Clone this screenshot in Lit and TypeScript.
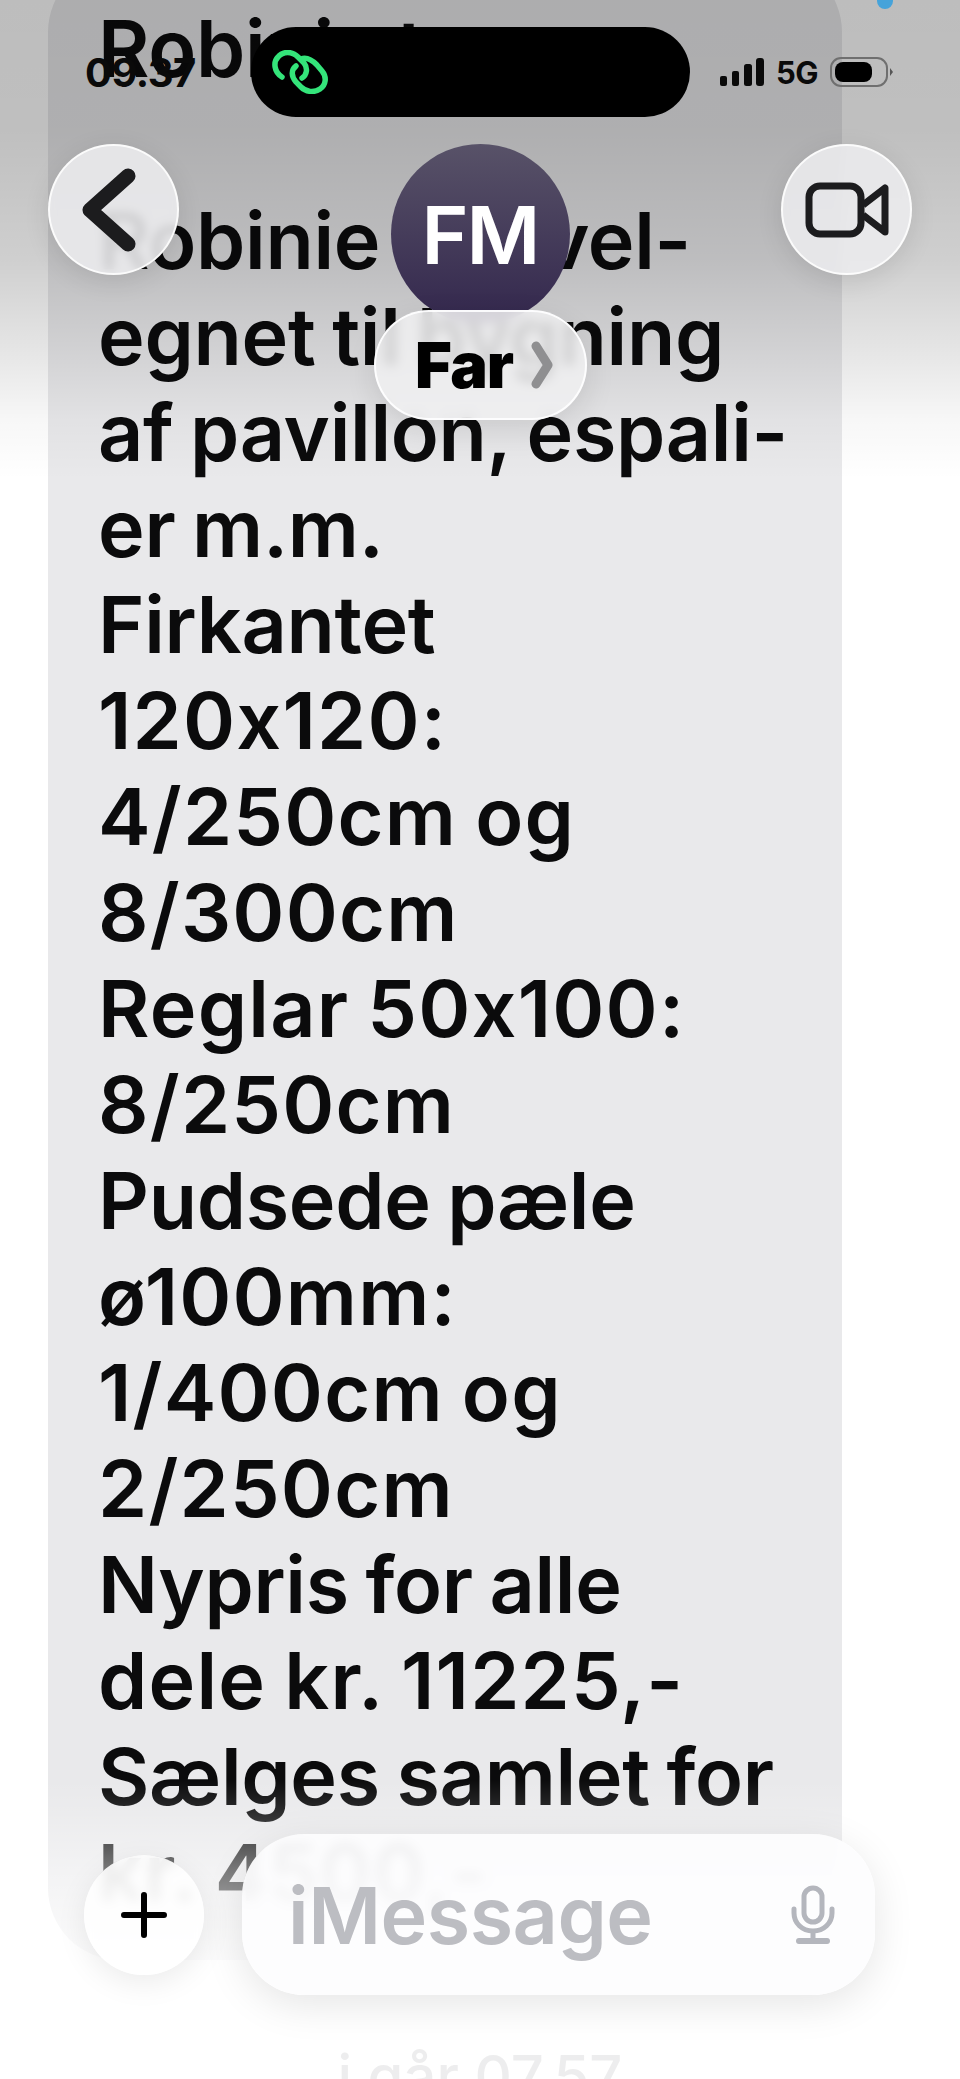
import { LitElement, html, css } from 'lit';
import { customElement } from 'lit/decorators.js';

const LINES = [
  'Robinie træ',
  '\u00a0',
  'Robinie træ vel-',
  'egnet til bygning',
  'af pavillon, espali-',
  'er m.m.',
  'Firkantet',
  '120x120:',
  '4/250cm og',
  '8/300cm',
  'Reglar 50x100:',
  '8/250cm',
  'Pudsede pæle',
  'ø100mm:',
  '1/400cm og',
  '2/250cm',
  'Nypris for alle',
  'dele kr. 11225,-',
  'Sælges samlet for',
  'kr. 4500,-',
];

@customElement('app-root')
export class AppRoot extends LitElement {
  static styles = css`
    :host {
      display: block;
      position: relative;
      height: 2079px;
      overflow: hidden;
      background: #fff;
      font-family: Inter, 'Liberation Sans', sans-serif;
    }

    .thread {
      display: flex;
      flex-direction: column;
      align-items: center;
      margin-top: -40px;
    }

    .bubble {
      align-self: flex-start;
      box-sizing: border-box;
      width: 794px;
      height: 2000px;
      margin-left: 48px;
      padding: 40px 0 0 50px;
      background: #e9e9eb;
      border-radius: 72px;
      color: #0b0b0c;
      font-size: 79px;
      font-weight: 600;
      line-height: 96px;
      letter-spacing: -0.3px;
      word-spacing: -3px;
      white-space: nowrap;
    }

    /* digits run wider in the reference */
    .num {
      letter-spacing: 1.2px;
    }

    .stamp {
      margin-top: 84px;
      color: #6f6f73;
      font-size: 58px;
      font-weight: 500;
      line-height: 64px;
    }

    .top-fade {
      position: absolute;
      inset: 0 0 auto 0;
      height: 480px;
      background: linear-gradient(
        to bottom,
        rgba(0, 0, 0, 0.26) 0,
        rgba(0, 0, 0, 0.25) 130px,
        rgba(0, 0, 0, 0.19) 260px,
        rgba(0, 0, 0, 0.1) 350px,
        rgba(0, 0, 0, 0.03) 420px,
        rgba(0, 0, 0, 0) 480px
      );
    }

    .bottom-fade {
      position: absolute;
      inset: auto 0 0 0;
      height: 300px;
      background: linear-gradient(
        to bottom,
        rgba(255, 255, 255, 0) 0,
        rgba(255, 255, 255, 0.12) 30px,
        rgba(255, 255, 255, 0.45) 90px,
        rgba(255, 255, 255, 0.88) 190px,
        rgba(255, 255, 255, 0.88) 100%
      );
    }

    .dot {
      position: absolute;
      top: -7px;
      left: 877px;
      width: 16px;
      height: 16px;
      border-radius: 50%;
      background: #46a3da;
    }

    .status {
      position: absolute;
      top: 27px;
      left: 0;
      right: 0;
      display: grid;
      grid-template-columns: 251px 439px 1fr;
      align-items: center;
      height: 90px;
      color: #0a0a0a;
    }

    .time {
      padding-left: 85px;
      font-size: 40px;
      font-weight: 700;
      letter-spacing: -0.5px;
    }

    .island {
      display: flex;
      align-items: center;
      height: 90px;
      padding-left: 20px;
      box-sizing: border-box;
      border-radius: 45px;
      background: #000;
    }

    .sys {
      display: flex;
      align-items: center;
      padding-left: 30px;
      gap: 12px;
    }

    .net {
      font-size: 31px;
      font-weight: 700;
      letter-spacing: -0.5px;
    }

    .nav {
      position: absolute;
      top: 144px;
      left: 48px;
      right: 48px;
      display: flex;
      justify-content: space-between;
      align-items: flex-start;
    }

    .round {
      display: flex;
      align-items: center;
      justify-content: center;
      width: 131px;
      height: 131px;
      box-sizing: border-box;
      border-radius: 50%;
      border: 2px solid rgba(255, 255, 255, 0.85);
      background: rgba(236, 236, 238, 0.88);
      backdrop-filter: blur(5px);
      box-shadow: 0 6px 26px rgba(0, 0, 0, 0.1);
    }

    .contact {
      display: flex;
      flex-direction: column;
      align-items: center;
    }

    .avatar {
      display: flex;
      align-items: center;
      justify-content: center;
      width: 179px;
      height: 180px;
      border-radius: 50%;
      background: linear-gradient(to bottom, #585268, #33274d);
      color: #fff;
      font-size: 80px;
      font-weight: 600;
      letter-spacing: -2px;
    }

    .name {
      display: flex;
      align-items: center;
      justify-content: center;
      gap: 18px;
      box-sizing: border-box;
      width: 213px;
      height: 110px;
      margin-top: -14px;
      padding-left: 8px;
      border-radius: 55px;
      border: 2px solid rgba(255, 255, 255, 0.9);
      background: rgba(240, 240, 241, 0.86);
      backdrop-filter: blur(6px);
      box-shadow: 0 10px 30px rgba(0, 0, 0, 0.1);
      color: #000;
      font-size: 63px;
      font-weight: 900;
      letter-spacing: -1px;
    }

    .composer {
      position: absolute;
      top: 1834px;
      left: 84px;
      right: 85px;
      display: flex;
      align-items: center;
      gap: 38px;
    }

    .plus {
      display: flex;
      flex: none;
      align-items: center;
      justify-content: center;
      width: 120px;
      height: 120px;
      border-radius: 50%;
      background: rgba(255, 255, 255, 0.86);
      backdrop-filter: blur(6px);
      box-shadow: 0 8px 30px rgba(0, 0, 0, 0.08);
    }

    .field {
      display: flex;
      flex: 1;
      align-items: center;
      justify-content: space-between;
      box-sizing: border-box;
      height: 161px;
      padding: 0 40px 0 46px;
      border-radius: 62px;
      background: rgba(253, 253, 254, 0.92);
      backdrop-filter: blur(6px);
      box-shadow: 0 10px 40px rgba(0, 0, 0, 0.1);
      color: #bcbdc2;
      font-size: 79px;
      font-weight: 600;
      letter-spacing: -0.5px;
    }
  `;

  render() {
    return html`
      <div class="thread">
        <div class="bubble">
          ${LINES.map((l) => html`<div class=${/\d/.test(l) ? 'num' : ''}>${l}</div>`)}
        </div>
        <div class="stamp">i går 07.57</div>
      </div>

      <div class="top-fade"></div>
      <div class="bottom-fade"></div>
      <div class="dot"></div>

      <div class="status">
        <div class="time">09.37</div>
        <div class="island">
          <svg width="60" height="44" viewBox="0 0 60 44" fill="none" stroke="#34e47a" stroke-width="5.5" stroke-linecap="round">
            <path d="M11 27 C3 22 2 12 7 7 C12 1 21 1 27 7 L33 13 C37 18 36 25 31 28" />
            <path d="M30 9 C35 7 41 10 46 15 L51 21 C56 27 55 35 49 39 C43 43 35 42 30 37 L25 32 C20 26 20 20 25 16" />
          </svg>
        </div>
        <div class="sys">
          <svg width="44" height="28" viewBox="0 0 44 28" fill="#0a0a0a">
            <rect x="0" y="18" width="7" height="10" rx="2" />
            <rect x="12" y="13" width="7" height="15" rx="2" />
            <rect x="24" y="6" width="8" height="22" rx="2.5" />
            <rect x="36" y="0" width="8" height="28" rx="3" />
          </svg>
          <span class="net">5G</span>
          <svg width="64" height="30" viewBox="0 0 64 30" fill="none">
            <rect x="1" y="1" width="56" height="28" rx="10" stroke="#6f6f6f" stroke-width="2" />
            <rect x="5" y="5" width="37" height="20" rx="8" fill="#000" />
            <path d="M60 11 L63 15 L60 19 Z" fill="#555" />
          </svg>
        </div>
      </div>

      <div class="nav">
        <div class="round">
          <svg width="64" height="84" viewBox="0 0 64 84" fill="none" stroke="#1c1c1e" stroke-width="15" stroke-linecap="round" stroke-linejoin="round">
            <path d="M46 8 L8 42 L46 76" />
          </svg>
        </div>
        <div class="contact">
          <div class="avatar">FM</div>
          <div class="name">
            <span>Far</span>
            <svg width="22" height="48" viewBox="0 0 22 48" fill="none" stroke="#8f8f91" stroke-width="9" stroke-linecap="round" stroke-linejoin="round">
              <path d="M5 5 L17 24 L5 43" />
            </svg>
          </div>
        </div>
        <div class="round">
          <svg width="84" height="56" viewBox="0 0 84 56" fill="none" stroke="#1c1c1e" stroke-width="7" stroke-linejoin="round">
            <rect x="4" y="4" width="52" height="48" rx="11" />
            <path d="M58 23 L80 6 L80 50 L58 33" />
          </svg>
        </div>
      </div>

      <div class="composer">
        <div class="plus">
          <svg width="46" height="46" viewBox="0 0 46 46" stroke="#000" stroke-width="6" stroke-linecap="round">
            <path d="M23 3 V43 M3 23 H43" />
          </svg>
        </div>
        <div class="field">
          <span>iMessage</span>
          <svg width="44" height="60" viewBox="0 0 44 60" fill="none" stroke="#b4b6bd" stroke-width="5" stroke-linecap="round">
            <rect x="13" y="3" width="18" height="34" rx="9" />
            <path d="M3 24 V28 C3 38 11 46 22 46 C33 46 41 38 41 28 V24 M22 46 V55" />
            <path d="M8 56 H36" stroke-width="6" />
          </svg>
        </div>
      </div>
    `;
  }
}
